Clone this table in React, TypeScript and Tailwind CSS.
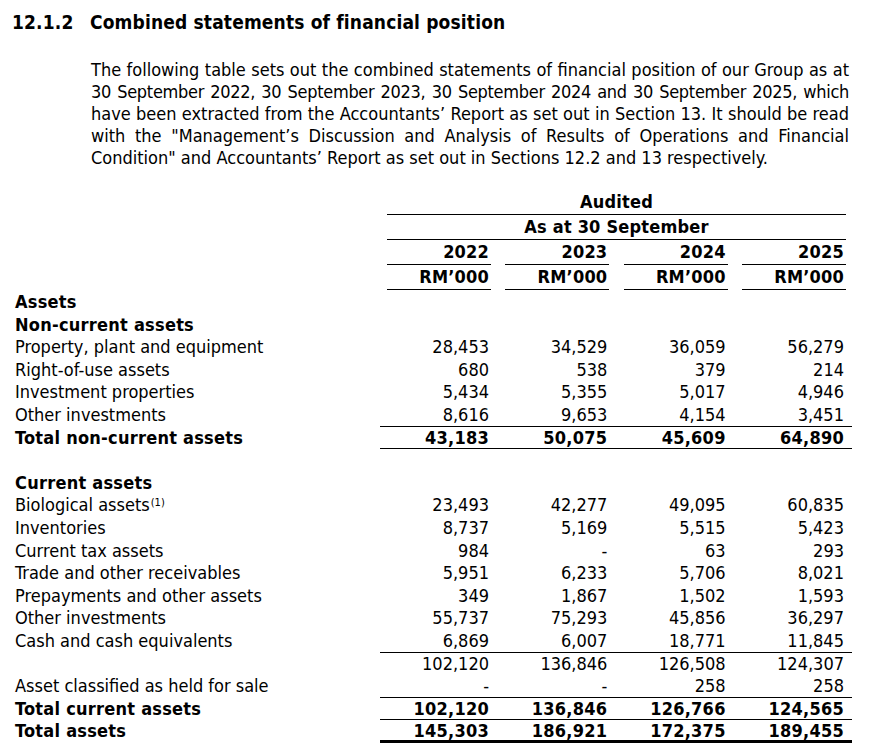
const font = { fontFamily: '"DejaVu Sans Condensed", "DejaVu Sans", sans-serif' };

type Row = {
  label: string;
  values?: string[];
  bold?: boolean;
  sup?: string;
  line?: "thin" | "thick";
};

const rows: Row[] = [
  { label: "Assets", bold: true },
  { label: "Non-current assets", bold: true },
  { label: "Property, plant and equipment", values: ["28,453", "34,529", "36,059", "56,279"] },
  { label: "Right-of-use assets", values: ["680", "538", "379", "214"] },
  { label: "Investment properties", values: ["5,434", "5,355", "5,017", "4,946"] },
  { label: "Other investments", values: ["8,616", "9,653", "4,154", "3,451"], line: "thin" },
  { label: "Total non-current assets", values: ["43,183", "50,075", "45,609", "64,890"], bold: true, line: "thin" },
  { label: "" },
  { label: "Current assets", bold: true },
  { label: "Biological assets", sup: "(1)", values: ["23,493", "42,277", "49,095", "60,835"] },
  { label: "Inventories", values: ["8,737", "5,169", "5,515", "5,423"] },
  { label: "Current tax assets", values: ["984", "-", "63", "293"] },
  { label: "Trade and other receivables", values: ["5,951", "6,233", "5,706", "8,021"] },
  { label: "Prepayments and other assets", values: ["349", "1,867", "1,502", "1,593"] },
  { label: "Other investments", values: ["55,737", "75,293", "45,856", "36,297"] },
  { label: "Cash and cash equivalents", values: ["6,869", "6,007", "18,771", "11,845"], line: "thin" },
  { label: "", values: ["102,120", "136,846", "126,508", "124,307"] },
  { label: "Asset classified as held for sale", values: ["-", "-", "258", "258"], line: "thin" },
  { label: "Total current assets", values: ["102,120", "136,846", "126,766", "124,565"], bold: true, line: "thin" },
  { label: "Total assets", values: ["145,303", "186,921", "172,375", "189,455"], bold: true, line: "thick" },
];

const years = ["2022", "2023", "2024", "2025"];

function TableRow({ row }: { row: Row }) {
  const border =
    row.line === "thick" ? "border-b-[3px] border-black" : row.line === "thin" ? "border-b border-black" : "";
  return (
    <div className={`flex h-[22.6px] leading-[22.6px] ${row.bold ? "font-bold tracking-[0.25px]" : ""}`}>
      <div className="w-[365px] whitespace-nowrap">
        {row.label}
        {row.sup && <sup className="ml-[1px] text-[11px] leading-none">{row.sup}</sup>}
      </div>
      <div className={`flex w-[472px] justify-between pl-[7px] pr-[6px] ${row.line === "thick" ? "h-auto" : "h-full"} ${border}`}>
        {(row.values ?? ["", "", "", ""]).map((v, i) => (
          <div key={i} className="w-[104px] pr-[2px] text-right">
            {v}
          </div>
        ))}
      </div>
    </div>
  );
}

export default function App() {
  return (
    <div className="min-h-[756px] w-[878px] bg-white text-black" style={font}>
      <h2 className="flex pt-[10px] text-[19px] font-bold leading-[24px] tracking-[0.15px]">
        <span className="w-[90px] pl-[12px]">12.1.2</span>
        <span>Combined statements of financial position</span>
      </h2>

      <div className="ml-[91px] mt-[25px] w-[758px] whitespace-nowrap text-[18px] leading-[22px]">
        <div className="text-justify [text-align-last:justify]">
          The following table sets out the combined statements of financial position of our Group as at
        </div>
        <div className="text-justify tracking-[-0.3px] [text-align-last:justify]">
          30 September 2022, 30 September 2023, 30 September 2024 and 30 September 2025, which
        </div>
        <div className="text-justify [text-align-last:justify]">
          have been extracted from the Accountants’ Report as set out in Section 13. It should be read
        </div>
        <div className="text-justify [text-align-last:justify]">
          with the "Management’s Discussion and Analysis of Results of Operations and Financial
        </div>
        <div>Condition" and Accountants’ Report as set out in Sections 12.2 and 13 respectively.</div>
      </div>

      <div className="ml-[15px] mt-[21px] text-[18px]">
        <div className="ml-[372px] w-[459px] font-bold leading-[24px] tracking-[0.2px]">
          <div className="h-[25px] border-b border-black text-center">Audited</div>
          <div className="h-[25px] border-b border-black text-center">As at 30 September</div>
          <div className="flex justify-between">
            {years.map((y) => (
              <div key={y} className="h-[25px] w-[104px] border-b border-black pr-[2px] text-right">
                {y}
              </div>
            ))}
          </div>
          <div className="flex justify-between">
            {years.map((y) => (
              <div key={y} className="h-[25px] w-[104px] border-b border-black pr-[2px] text-right">
                RM’000
              </div>
            ))}
          </div>
        </div>

        <div className="mt-[1px]">
          {rows.map((r, i) => (
            <TableRow key={i} row={r} />
          ))}
        </div>
      </div>
    </div>
  );
}
